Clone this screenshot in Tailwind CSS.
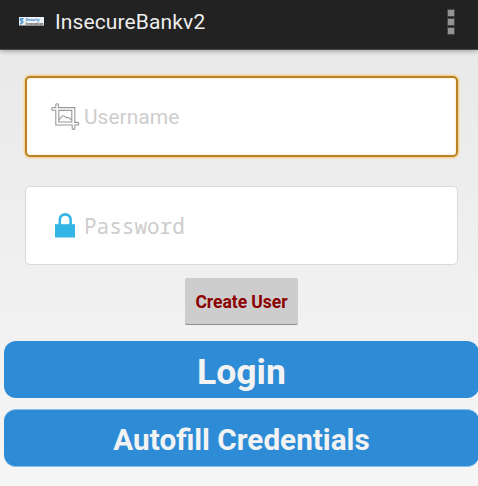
<!DOCTYPE html>
<html lang="en">
<head>
<meta charset="utf-8">
<title>InsecureBankv2</title>
<script src="https://cdn.jsdelivr.net/npm/@tailwindcss/browser@4"></script>
</head>
<body class="h-[486px] w-[478px] overflow-hidden bg-linear-to-b from-[#e8e8e8] to-[#f6f6f6] font-['Roboto',sans-serif]">
<header class="flex h-[50px] items-center border-b border-[#4a4a4a] bg-[#222222] pl-[19px] pr-[24px] pb-[6px] shadow-[0_1px_5px_rgba(0,0,0,0.35)]">
  <svg class="h-[9px] w-[25px] shrink-0" viewBox="0 0 25 9" aria-hidden="true">
    <rect width="25" height="8.5" fill="#eef1f3"/>
    <path d="M1 1h4L3.5 3.5 5 5 2.5 7.5H0.5L2 5 0.5 3Z" fill="#5b9fd6"/>
    <text x="6.5" y="3.9" font-size="4" font-weight="700" textLength="14" fill="#3f8fd0">Security</text>
    <text x="6.5" y="7.5" font-size="4" font-weight="700" textLength="18" lengthAdjust="spacingAndGlyphs" fill="#555">Innovation</text>
  </svg>
  <h1 class="ml-[11px] whitespace-nowrap pt-px text-[21px] leading-6 tracking-[0.12px] text-[#ededed]">InsecureBankv2</h1>
  <div class="ml-auto flex flex-col gap-[3px]">
    <i class="size-[6px] bg-[#939393] ring-1 ring-[#444]"></i>
    <i class="size-[6px] bg-[#939393] ring-1 ring-[#444]"></i>
    <i class="size-[6px] bg-[#939393] ring-1 ring-[#444]"></i>
  </div>
</header>
<main class="flex flex-col pt-[26px]">
  <div class="ml-[25px] flex h-[81px] w-[433px] items-center rounded-[5px] border-2 border-[#b98429] bg-white pl-[24px] shadow-[0_0_2px_1px_#f5cb73,inset_0_0_2px_#f9d9a0]">
    <svg class="h-[28px] w-[29px] shrink-0" viewBox="0 0 29 28" fill="none" stroke="#999" stroke-width="1.1" aria-hidden="true">
      <path d="M4.8 4.6V1.5Q4.8 .7 6.1 .7 7.4 .7 7.4 1.5V4.6H23.8V19.4H26.8Q27.8 19.4 27.8 20.7 27.8 22 26.8 22H23.8V25.4Q23.8 26.4 22.5 26.4 21.2 26.4 21.2 25.4V22H4.8V7.2H1.6Q.7 7.2 .7 5.9 .7 4.6 1.6 4.6Z"/>
      <path d="M7.8 7.4H20.8V19H7.8Z"/>
      <path d="M8.2 16.8 10 14.5Q11.5 11.4 14 13.7L16 14.8Q17.2 13.9 18.6 15.3L20.5 17"/>
    </svg>
    <span class="ml-[4px] text-[21px] leading-6 text-[#cdcdcd]">Username</span>
  </div>
  <div class="ml-[25px] mt-[29px] flex h-[79px] w-[433px] items-center rounded-[5px] border border-[#d9d9d9] bg-white pl-[29px]">
    <svg class="h-[25px] w-[20px] shrink-0" viewBox="0 0 20 25" aria-hidden="true">
      <path d="M0 11.2H20V24.5H0Z" fill="#33b5e5"/>
      <path d="M4.8 12V6.8C4.8-.4 15.6-.4 15.6 6.8V12" fill="none" stroke="#33b5e5" stroke-width="2.6"/>
    </svg>
    <span class="ml-[9px] font-['Noto_Sans_Mono','DejaVu_Sans_Mono',monospace] text-[21px] leading-6 text-[#cdcdcd]">Password</span>
  </div>
  <button class="ml-[185px] mt-[13px] h-[47px] w-[113px] rounded-[2px] border-b border-[#8f8f8f] bg-[#cdcdcd] pt-[2px] whitespace-nowrap text-[17.5px] font-bold leading-6 tracking-[-0.05px] text-[#8b0000]">Create User</button>
  <button class="ml-[4px] mt-[16px] h-[57px] w-[475px] rounded-[12px] bg-[#2e8cd7] pt-[5px] text-[35.5px] font-bold leading-[42px] text-[#f3f3f3]">Login</button>
  <button class="ml-[4px] mt-[11px] h-[58px] w-[475px] rounded-[12px] border-y border-[#8fc0e8] bg-[#2e8cd7] pt-[3px] text-[29.7px] font-bold leading-9 text-[#f3f3f3]">Autofill Credentials</button>
</main>
</body>
</html>
